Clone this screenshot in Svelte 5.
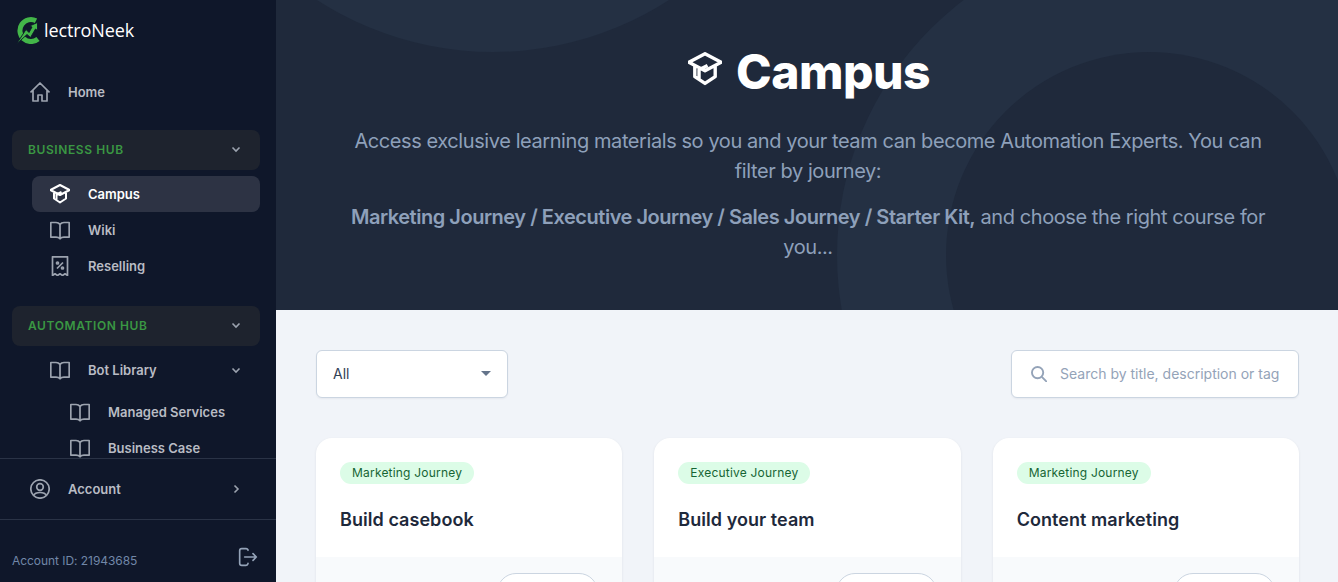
<script>
  const cards = [
    { tag: 'Marketing Journey', title: 'Build casebook' },
    { tag: 'Executive Journey', title: 'Build your team' },
    { tag: 'Marketing Journey', title: 'Content marketing' },
  ];
</script>

{#snippet book()}
  <svg class="icon" viewBox="2 2 20 20" fill="none" stroke="currentColor" stroke-width="1.700" stroke-linejoin="round">
    <path d="M12 6.500C11 5 9.500 4.500 8 4.500H2.800v14.700H8c1.500 0 3 .4 4 1.600 1-1.200 2.500-1.600 4-1.600h5.200V4.500H16c-1.500 0-3 .5-4 2zM12 6.500v14.300" />
  </svg>
{/snippet}

{#snippet cap()}
  <path d="M12 3 2.500 8 12 13l9.500-5zM6 10v6.500l6 4 6-4V10M8.500 18v-5.500L13.500 10" />
{/snippet}

{#snippet chevron()}
  <svg class="chev" viewBox="0 0 12 12" fill="none" stroke="currentColor" stroke-width="1.600">
    <path d="M2.500 4.500 6 8l3.500-3.500" />
  </svg>
{/snippet}

<div class="layout">
  <aside class="sidebar">
    <div class="logo">
      <svg class="logo-mark" viewBox="0 0 28 28">
        <path d="M21 4.800A11 11 0 1 0 23 23" fill="none" stroke="#43b649" stroke-width="5" />
        <path d="M1.500 28 11 13.500l3 3 3-5.500-2.500-1L22.500 6.500V14.500l-2-1.500-5 8.500-3.500-3z" fill="#43b649" stroke="#0f172a" stroke-width="0.900" />
      </svg>
      <span>lectroNeek</span>
    </div>

    <nav class="nav">
      <a class="item home">
        <svg class="icon" viewBox="2 2 20 20" fill="none" stroke="currentColor" stroke-width="1.700" stroke-linejoin="round">
          <path d="M2.500 12.500 12 3l9.500 9.500M5 10.500v10.500h5v-6h4v6h5V10.500" />
        </svg>
        <span>Home</span>
      </a>

      <div class="hub"><span>BUSINESS HUB</span>{@render chevron()}</div>
      <a class="item sub active">
        <svg class="icon" viewBox="2 2 20 20" fill="none" stroke="currentColor" stroke-width="2" stroke-linejoin="round">
          {@render cap()}
        </svg>
        <span>Campus</span>
      </a>
      <a class="item sub">{@render book()}<span>Wiki</span></a>
      <a class="item sub">
        <svg class="icon" viewBox="2 2 20 20" fill="none" stroke="currentColor" stroke-width="1.700" stroke-linejoin="round">
          <path d="M4.500 2.800h15v18.700l-2.500-1.700-2.500 1.700-2.500-1.700-2.500 1.700-2.500-1.700-2.500 1.700z" />
          <path d="m9 14.500 6-6" />
          <circle cx="9.500" cy="9" r="1" />
          <circle cx="14.500" cy="14" r="1" />
        </svg>
        <span>Reselling</span>
      </a>

      <div class="hub second"><span>AUTOMATION HUB</span>{@render chevron()}</div>
      <a class="item sub lib">{@render book()}<span>Bot Library</span>{@render chevron()}</a>
      <a class="item deep first">{@render book()}<span>Managed Services</span></a>
      <a class="item deep">{@render book()}<span>Business Case</span></a>
    </nav>

    <div class="account">
      <svg class="icon" viewBox="2 2 20 20" fill="none" stroke="currentColor" stroke-width="1.700">
        <circle cx="12" cy="12" r="9.200" />
        <circle cx="12" cy="10" r="3.300" />
        <path d="M5.500 18.500c1-2 3-3 6.500-3s5.500 1 6.500 3" />
      </svg>
      <span>Account</span>
      <svg class="chev" viewBox="0 0 12 12" fill="none" stroke="currentColor" stroke-width="1.600">
        <path d="M4.500 2.500 8 6 4.500 9.500" />
      </svg>
    </div>

    <div class="foot">
      <span>Account ID: 21943685</span>
      <svg class="logout" viewBox="0 0 24 24" fill="none" stroke="currentColor" stroke-width="2" stroke-linecap="round" stroke-linejoin="round">
        <path d="M12 4V3.500A2.500 2.500 0 0 0 9.500 2h-5A2.500 2.500 0 0 0 2 4.500v15A2.500 2.500 0 0 0 4.500 22h5a2.500 2.500 0 0 0 2.500-2v-.5M8 12h14M18 8l4 4-4 4" />
      </svg>
    </div>
  </aside>

  <main class="main">
    <header class="hero">
      <div class="blob blob-a"></div>
      <div class="blob blob-b"></div>
      <div class="blob blob-c"></div>
      <div class="hero-inner">
        <h1>
          <svg class="h-icon" viewBox="2 2 20 20" fill="none" stroke="currentColor" stroke-width="2" stroke-linejoin="round">
            {@render cap()}
          </svg>
          <span>Campus</span>
        </h1>
        <p>Access exclusive learning materials so you and your team can become Automation Experts. You can filter by journey:</p>
        <p><strong>Marketing Journey / Executive Journey / Sales Journey / Starter Kit,</strong> and choose the right course for you...</p>
      </div>
    </header>

    <section class="content">
      <div class="filters">
        <div class="select"><span>All</span><i class="caret"></i></div>
        <div class="search">
          <svg viewBox="1.500 1.500 17 17" fill="none" stroke="#94a3b8" stroke-width="2">
            <circle cx="8.500" cy="8.500" r="6" />
            <path d="m13 13 5.500 5.500" />
          </svg>
          <span>Search by title, description or tag</span>
        </div>
      </div>

      <div class="grid">
        {#each cards as card}
          <article class="card">
            <div class="body">
              <span class="tag">{card.tag}</span>
              <h3>{card.title}</h3>
            </div>
            <div class="card-foot"><div class="btn"></div></div>
          </article>
        {/each}
      </div>
    </section>
  </main>
</div>

<style>
  :global(body) {
    margin: 0;
    font-family: Inter, "Liberation Sans", sans-serif;
  }

  .layout {
    display: flex;
    height: 582px;
    overflow: hidden;
  }

  .sidebar {
    flex: 0 0 276px;
    display: flex;
    flex-direction: column;
    background: #0f172a;
    color: #b9bcc4;
  }

  .logo {
    display: flex;
    align-items: center;
    height: 60px;
    padding-left: 15px;
    gap: 1px;
    color: #fff;
    font-family: "Open Sans", sans-serif;
    font-weight: 500;
    font-size: 18px;
    letter-spacing: -0.1px;
  }

  .logo-mark {
    width: 28px;
    height: 28px;
  }

  .nav {
    flex: 1;
    min-height: 0;
    overflow: hidden;
    padding: 14px 16px 0 12px;
    font-size: 13px;
    font-weight: 600;
  }

  .item {
    display: flex;
    align-items: center;
    height: 36px;
    gap: 18px;
    border-radius: 8px;
  }

  .icon {
    width: 20px;
    height: 20px;
    flex: none;
    color: #9ca3af;
  }

  .home {
    padding-left: 18px;
    margin-bottom: 20px;
  }

  .hub {
    display: flex;
    align-items: center;
    justify-content: space-between;
    height: 40px;
    box-sizing: border-box;
    padding: 0 18px 2px 16px;
    margin-bottom: 6px;
    border-radius: 8px;
    background: #1e232e;
    color: #3a9743;
    font-size: 12px;
    letter-spacing: 0.6px;
  }

  .second {
    margin-top: 22px;
    margin-bottom: 6px;
  }

  .chev {
    width: 12px;
    height: 12px;
    color: #9ca3af;
    flex: none;
  }

  .sub {
    margin-left: 20px;
    padding: 0 18px;
  }

  .active {
    background: #2d3344;
    color: #fff;
  }

  .active .icon {
    color: #fff;
  }

  .lib span {
    flex: 1;
  }

  .deep {
    margin-left: 40px;
    padding-left: 18px;
  }

  .first {
    margin-top: 6px;
  }

  .account {
    display: flex;
    align-items: center;
    height: 60px;
    padding: 0 34px 0 30px;
    gap: 18px;
    border-top: 1px solid #2a3346;
    border-bottom: 1px solid #2a3346;
    font-size: 13px;
    font-weight: 600;
  }

  .account span {
    flex: 1;
  }

  .foot {
    display: flex;
    align-items: center;
    justify-content: space-between;
    height: 62px;
    padding: 18px 18px 0 12px;
    box-sizing: border-box;
    color: #7187a8;
    font-size: 12px;
    letter-spacing: -0.05px;
  }

  .logout {
    width: 20px;
    height: 20px;
    color: #94a3b8;
    margin-top: -6px;
  }

  .main {
    flex: 1;
    min-width: 0;
    background: #f1f4f9;
  }

  .hero {
    position: relative;
    height: 310px;
    overflow: hidden;
    background: #1f293b;
  }

  .blob {
    position: absolute;
    border-radius: 50%;
    background: #243043;
  }

  .blob-a {
    width: 648px;
    height: 648px;
    left: -107px;
    top: -596px;
  }

  .blob-b {
    width: 640px;
    height: 640px;
    left: 561px;
    top: -65px;
  }

  .blob-c {
    width: 406px;
    height: 406px;
    left: 670px;
    top: 52px;
    background: #1f293b;
  }

  .hero-inner {
    position: relative;
    box-sizing: border-box;
    width: 920px;
    margin: 0 auto;
    padding-top: 44px;
    text-align: center;
    color: #8ea0ba;
    font-size: 20px;
    line-height: 30px;
    letter-spacing: -0.42px;
    left: 1px;
  }

  h1 {
    display: flex;
    align-items: center;
    justify-content: center;
    gap: 14px;
    margin: 0 0 26px;
    padding-left: 2px;
    color: #fff;
    font-size: 48px;
    line-height: 56px;
    font-weight: 800;
    letter-spacing: -0.5px;
  }

  .h-icon {
    width: 34px;
    height: 34px;
    margin-top: -6px;
  }

  p {
    margin: 0 0 16px;
  }

  strong {
    font-weight: 600;
    letter-spacing: -0.47px;
  }

  .content {
    padding: 40px 39px 40px 40px;
  }

  .filters {
    display: flex;
    justify-content: space-between;
    margin-bottom: 40px;
  }

  .select,
  .search {
    display: flex;
    align-items: center;
    box-sizing: border-box;
    height: 48px;
    background: #fff;
    border: 1px solid #cbd5e1;
    border-radius: 6px;
    font-size: 14px;
    box-shadow: 0 1px 2px rgba(15, 23, 42, 0.05);
  }

  .select {
    width: 192px;
    padding: 0 16px 1px;
    justify-content: space-between;
    color: #334155;
  }

  .caret {
    border: 5px solid transparent;
    border-top: 5px solid #64748b;
    border-bottom: 0;
  }

  .search {
    width: 288px;
    padding: 0 10px 1px 19px;
    gap: 13px;
    color: #94a3b8;
    white-space: nowrap;
  }

  .search svg {
    width: 16px;
    height: 16px;
    flex: none;
  }

  .grid {
    display: grid;
    grid-template-columns: repeat(3, 1fr);
    gap: 32px;
  }

  .card {
    background: #fff;
    border-radius: 16px;
    overflow: hidden;
    box-shadow: 0 1px 3px rgba(15, 23, 42, 0.08);
  }

  .body {
    height: 119px;
    box-sizing: border-box;
    padding: 24px 24px 0;
  }

  .tag {
    display: block;
    width: fit-content;
    height: 22px;
    line-height: 21px;
    padding: 0 12px;
    border-radius: 11px;
    background: #dcfce7;
    color: #166534;
    font-size: 12px;
    letter-spacing: 0.2px;
  }

  h3 {
    margin: 22px 0 0;
    color: #1e293b;
    font-size: 18px;
    line-height: 28px;
    font-weight: 600;
    letter-spacing: 0.05px;
  }

  .card-foot {
    display: flex;
    justify-content: flex-end;
    height: 80px;
    padding: 16px 24px 0;
    background: #f8fafc;
  }

  .btn {
    width: 99px;
    height: 38px;
    border: 1px solid #cbd5e1;
    border-radius: 19px;
    background: #fff;
  }
</style>
